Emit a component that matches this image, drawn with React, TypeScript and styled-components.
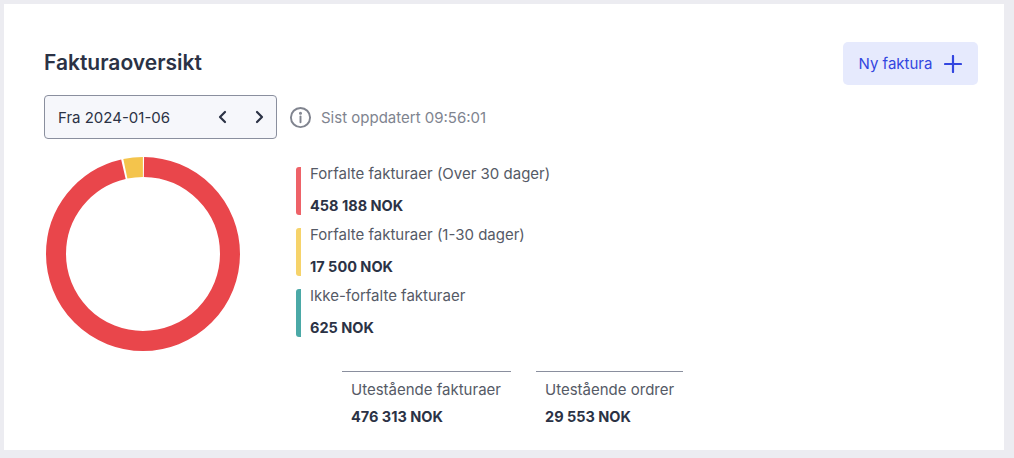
import styled, { createGlobalStyle } from "styled-components"

const Global = createGlobalStyle`
    html, body { margin: 0; background: #ececf1; }
    body { font-family: Inter, "Noto Sans", sans-serif; color: #2b3245; }
`

const Page = styled.div`
    padding: 4px 10px 8px 4px;
    height: 458px;
    box-sizing: border-box;
`
const Card = styled.div`
    background: white;
    height: 100%;
    box-sizing: border-box;
    padding: 38px 26px 0 40px;
`
const Header = styled.div`
    display: flex;
    justify-content: space-between;
    align-items: flex-start;
`
const Title = styled.h1`
    font-size: 21px;
    font-weight: 600;
    margin: 8px 0 0;
    color: #2b3245;
`
const NewButton = styled.button`
    height: 43px;
    width: 135px;
    background: #e6eafd;
    border: none;
    border-radius: 5px;
    color: #3346e0;
    font: 15px Inter, sans-serif;
    display: flex;
    align-items: center;
    justify-content: center;
    gap: 12px;
`
const Toolbar = styled.div`
    display: flex;
    align-items: center;
    gap: 12px;
    margin-top: 10px;
`
const DateBox = styled.div`
    width: 233px;
    height: 44px;
    box-sizing: border-box;
    border: 1px solid #8a8f9e;
    border-radius: 4px;
    background: #f6f7fb;
    display: flex;
    align-items: center;
    padding: 0 10px 0 13px;
    font-size: 15px;
`
const Arrows = styled.div`
    margin-left: auto;
    display: flex;
    gap: 22px;
`
const Updated = styled.div`
    display: flex;
    align-items: center;
    gap: 9px;
    color: #80848f;
    font-size: 15px;
`
const Body = styled.div`
    display: flex;
    margin-top: 14px;
    gap: 54px;
`
const Right = styled.div`
    padding-top: 14px;
`
const Legend = styled.div`
    display: flex;
    flex-direction: column;
    gap: 13px;
`
const Item = styled.div<{ color: string }>`
    border-left: 5px solid ${p => p.color};
    border-radius: 3px;
    padding-left: 9px;
    height: 48px;
    display: flex;
    flex-direction: column;
    justify-content: space-between;
`
const Label = styled.div`
    font-size: 15px;
    color: #555a66;
    line-height: 18px;
    margin-top: -2px;
`
const Amount = styled.div`
    font-size: 14.5px;
    font-weight: 700;
    color: #2b3245;
    line-height: 18px;
`
const Stats = styled.div`
    display: flex;
    gap: 25px;
    margin: 34px 0 0 46px;
`
const Stat = styled.div<{ w: number }>`
    width: ${p => p.w}px;
    border-top: 1px solid #8a8f9e;
    padding: 11px 0 0 9px;
    box-sizing: border-box;
    display: flex;
    flex-direction: column;
    gap: 9px;
`

const Donut = () => {
    const r = 87, c = 2 * Math.PI * r
    const yellow = 0.036
    return (
        <svg width="198" height="198" viewBox="0 0 198 198" style={{ marginTop: 2 }}>
            <g transform="rotate(-90 99 99)">
                <circle cx="99" cy="99" r={r} fill="none" stroke="#e9464b" strokeWidth="20"
                    strokeDasharray={`${c * (1 - yellow) - 2} ${c}`} strokeDashoffset={-1} />
                <circle cx="99" cy="99" r={r} fill="none" stroke="#f4c44c" strokeWidth="20"
                    strokeDasharray={`${c * yellow - 2} ${c}`} strokeDashoffset={-(c * (1 - yellow) + 1)} />
            </g>
        </svg>
    )
}

const items = [
    { color: "#ee6268", label: "Forfalte fakturaer (Over 30 dager)", amount: "458 188 NOK" },
    { color: "#f6d36a", label: "Forfalte fakturaer (1-30 dager)", amount: "17 500 NOK" },
    { color: "#4ba9a7", label: "Ikke-forfalte fakturaer", amount: "625 NOK" },
]

export default function App() {
    return (
        <Page>
            <Global />
            <Card>
                <Header>
                    <Title>Fakturaoversikt</Title>
                    <NewButton>Ny faktura
                        <svg width="18" height="18" viewBox="0 0 18 18" stroke="#3346e0" strokeWidth="2.2" strokeLinecap="round"><path d="M9 1v16M1 9h16" /></svg>
                    </NewButton>
                </Header>
                <Toolbar>
                    <DateBox>Fra 2024-01-06
                        <Arrows>
                            <svg width="14" height="14" viewBox="0 0 14 14" fill="none" stroke="#2b3245" strokeWidth="2.2" strokeLinecap="round" strokeLinejoin="round"><path d="M9 2L4 7l5 5" /></svg>
                            <svg width="14" height="14" viewBox="0 0 14 14" fill="none" stroke="#2b3245" strokeWidth="2.2" strokeLinecap="round" strokeLinejoin="round"><path d="M5 2l5 5-5 5" /></svg>
                        </Arrows>
                    </DateBox>
                    <Updated>
                        <svg width="23" height="23" viewBox="0 0 24 24" fill="none" stroke="#80848f" strokeWidth="2"><circle cx="12" cy="12" r="10" /><path d="M12 11v6" strokeLinecap="round" /><circle cx="12" cy="7.5" r="0.6" fill="#80848f" /></svg>
                        Sist oppdatert 09:56:01
                    </Updated>
                </Toolbar>
                <Body>
                    <Donut />
                    <Right>
                        <Legend>
                            {items.map(i => (
                                <Item key={i.label} color={i.color}>
                                    <Label>{i.label}</Label>
                                    <Amount>{i.amount}</Amount>
                                </Item>
                            ))}
                        </Legend>
                        <Stats>
                            <Stat w={169}><Label>Utestående fakturaer</Label><Amount>476 313 NOK</Amount></Stat>
                            <Stat w={147}><Label>Utestående ordrer</Label><Amount>29 553 NOK</Amount></Stat>
                        </Stats>
                    </Right>
                </Body>
            </Card>
        </Page>
    )
}
